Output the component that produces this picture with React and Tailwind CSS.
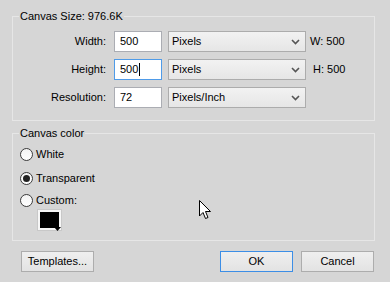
import React from "react";

const font = { fontFamily: '"Liberation Sans", Arial, sans-serif' };

const Chevron = () => (
  <svg width="9" height="6" viewBox="0 0 9 6" className="shrink-0">
    <path d="M1 1 L4.5 4.5 L8 1" fill="none" stroke="#555" strokeWidth="1.6" />
  </svg>
);

const Select = ({ value }) => (
  <div className="ml-[6px] flex h-[21px] w-[138px] items-center justify-between border border-[#acacac] bg-gradient-to-b from-[#f2f2f2] to-[#e6e6e6] pl-[3px] pr-[5px]">
    <span>{value}</span>
    <Chevron />
  </div>
);

const Row = ({ label, value, unit, note, focused }) => (
  <div className="flex h-[21px] items-center">
    <div className="w-[87px] text-right">{label}</div>
    <div
      className={
        "ml-[8px] flex h-[21px] w-[48px] items-center bg-white pl-[5px] " +
        (focused ? "border border-[#4f9be8]" : "border border-[#abadb3]")
      }
    >
      {value}
      {focused && <span className="ml-[1px] inline-block h-[13px] w-[1px] bg-black" />}
    </div>
    <Select value={unit} />
    {note && <span className={note.startsWith("H") ? "ml-[7px]" : "ml-[4px]"}>{note}</span>}
  </div>
);

const Radio = ({ checked, label }) => (
  <div className="flex h-[13px] items-center">
    <div className="flex h-[13px] w-[13px] items-center justify-center rounded-full border border-[#3c3c3c] bg-gradient-to-b from-[#f4f4f4] to-white">
      {checked && <div className="h-[7px] w-[7px] rounded-full bg-[#222]" />}
    </div>
    <span className="ml-[3px]">{label}</span>
  </div>
);

const Button = ({ children, primary, width }) => (
  <button
    className={
      "flex h-[21px] items-center justify-center bg-gradient-to-b from-[#efefef] to-[#e3e3e3] " +
      (primary ? "border border-[#3c8ee6]" : "border border-[#adadad]")
    }
    style={{ width }}
  >
    {children}
  </button>
);

export default function App() {
  return (
    <div
      className="relative h-[282px] w-[390px] overflow-hidden bg-[#d6d6d6] pt-[10px] text-[11px] leading-[13px] text-black"
      style={font}
    >
      <fieldset className="ml-[12px] h-[111px] w-[363px] border border-[#e6e6e6] px-[6px] pb-[12px]">
        <legend className="px-[1px]">Canvas Size: 976.6K</legend>
        <div className="mt-[8px] flex flex-col gap-[7px]">
          <Row label="Width:" value="500" unit="Pixels" note="W: 500" />
          <Row label="Height:" value="500" unit="Pixels" note="H: 500" focused />
          <Row label="Resolution:" value="72" unit="Pixels/Inch" />
        </div>
      </fieldset>

      <fieldset className="ml-[12px] mt-[6px] h-[114px] w-[363px] border border-[#e6e6e6] px-[6px]">
        <legend className="px-[1px]">Canvas color</legend>
        <div className="ml-[1px] mt-[8px] flex flex-col">
          <Radio label="White" />
          <div className="mt-[11px]">
            <Radio checked label="Transparent" />
          </div>
          <div className="mt-[9px]">
            <Radio label="Custom:" />
          </div>
          <div className="relative ml-[18px] mt-[3px] h-[20px] w-[23px] border-2 border-[#f6f6f6] bg-black outline outline-1 outline-[#c8c8c8]">
            <svg className="absolute -bottom-[3px] -right-[2px]" width="7" height="4" viewBox="0 0 7 4">
              <path d="M0 0 H7 L3.5 4 Z" fill="#000" />
            </svg>
          </div>
        </div>
      </fieldset>

      <div className="mt-[10px] flex items-center pl-[21px] pr-[16px]">
        <Button width="73px">Templates...</Button>
        <div className="ml-auto flex gap-[8px]">
          <Button primary width="73px">OK</Button>
          <Button width="73px">Cancel</Button>
        </div>
      </div>

      <svg className="absolute left-[199px] top-[200px]" width="13" height="20" viewBox="0 0 13 20">
        <path
          d="M0.5 0.5 L0.5 16 L4 12.5 L6.5 18.5 L9 17.5 L6.5 11.5 L11.5 11.5 Z"
          fill="#fff"
          stroke="#000"
          strokeWidth="1"
          strokeLinejoin="miter"
        />
      </svg>
    </div>
  );
}
